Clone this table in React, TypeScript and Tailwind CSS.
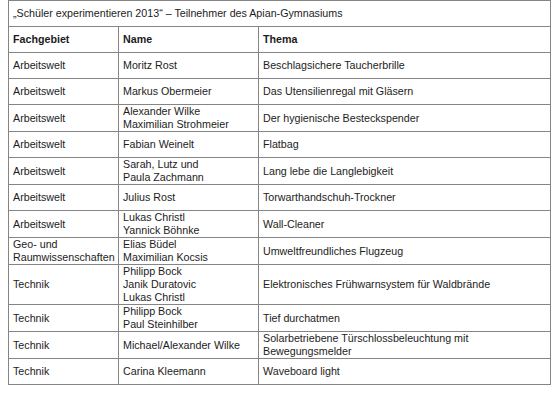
type Row = {
  gebiet: string[]
  name: string[]
  thema: string[]
  tall?: boolean
}

const rows: Row[] = [
  { gebiet: ['Arbeitswelt'], name: ['Moritz Rost'], thema: ['Beschlagsichere Taucherbrille'] },
  { gebiet: ['Arbeitswelt'], name: ['Markus Obermeier'], thema: ['Das Utensilienregal mit Gläsern'] },
  {
    gebiet: ['Arbeitswelt'],
    name: ['Alexander Wilke', 'Maximilian Strohmeier'],
    thema: ['Der hygienische Besteckspender'],
  },
  { gebiet: ['Arbeitswelt'], name: ['Fabian Weinelt'], thema: ['Flatbag'] },
  {
    gebiet: ['Arbeitswelt'],
    name: ['Sarah, Lutz und', 'Paula Zachmann'],
    thema: ['Lang lebe die Langlebigkeit'],
  },
  { gebiet: ['Arbeitswelt'], name: ['Julius Rost'], thema: ['Torwarthandschuh-Trockner'] },
  {
    gebiet: ['Arbeitswelt'],
    name: ['Lukas Christl', 'Yannick Böhnke'],
    thema: ['Wall-Cleaner'],
  },
  {
    gebiet: ['Geo- und', 'Raumwissenschaften'],
    name: ['Elias Büdel', 'Maximilian Kocsis'],
    thema: ['Umweltfreundliches Flugzeug'],
  },
  {
    gebiet: ['Technik'],
    name: ['Philipp Bock', 'Janik Duratovic', 'Lukas Christl'],
    thema: ['Elektronisches Frühwarnsystem für Waldbrände'],
    tall: true,
  },
  {
    gebiet: ['Technik'],
    name: ['Philipp Bock', 'Paul Steinhilber'],
    thema: ['Tief durchatmen'],
  },
  {
    gebiet: ['Technik'],
    name: ['Michael/Alexander Wilke'],
    thema: ['Solarbetriebene Türschlossbeleuchtung mit', 'Bewegungsmelder'],
  },
  { gebiet: ['Technik'], name: ['Carina Kleemann'], thema: ['Waveboard light'] },
]

function Lines({ lines }: { lines: string[] }) {
  return (
    <>
      {lines.map((l, i) => (
        <div key={i} className="whitespace-nowrap">
          {l}
        </div>
      ))}
    </>
  )
}

const cell = 'border border-[#858585] pl-[4px] pr-[2px] py-0 align-middle text-left'

export default function App() {
  return (
    <div className="min-h-[402px] w-[552px] bg-white pl-[8px] pr-[1px] font-['Liberation_Sans',Arial,sans-serif] text-[10.7px] leading-[13px] text-[#1c1c1c]">
      <table className="w-[543px] table-fixed border-collapse">
        <colgroup>
          <col className="w-[110px]" />
          <col className="w-[140px]" />
          <col />
        </colgroup>
        <tbody>
          <tr className="h-[26px]">
            <td colSpan={3} className={cell}>
              „Schüler experimentieren 2013“ – Teilnehmer des Apian-Gymnasiums
            </td>
          </tr>
          <tr className="h-[26px] font-bold">
            <td className={cell}>Fachgebiet</td>
            <td className={cell}>Name</td>
            <td className={cell}>Thema</td>
          </tr>
          {rows.map((r, i) => (
            <tr key={i} className={r.tall ? 'h-[39px]' : 'h-[26px]'}>
              <td className={cell}>
                <Lines lines={r.gebiet} />
              </td>
              <td className={cell}>
                <Lines lines={r.name} />
              </td>
              <td className={cell}>
                <Lines lines={r.thema} />
              </td>
            </tr>
          ))}
        </tbody>
      </table>
    </div>
  )
}
